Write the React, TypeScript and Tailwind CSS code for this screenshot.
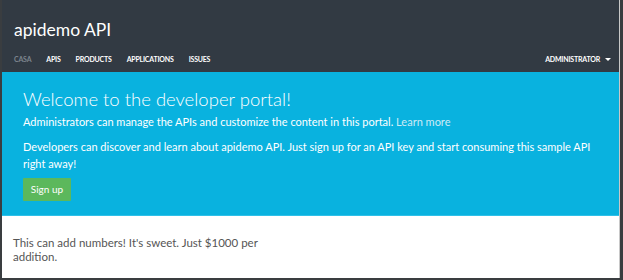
export default function App() {
  const nav = ["APIS", "PRODUCTS", "APPLICATIONS", "ISSUES"];
  return (
    <div
      className="h-[280px] w-[623px] overflow-hidden bg-[#3a3d40] pb-[2px] pl-[2px] pr-[3px]"
      style={{ fontFamily: "Lato, 'Open Sans', sans-serif" }}
    >
      <div className="flex h-full flex-col border-r border-[#c8c8c8] bg-white">
        <header className="h-[72px] bg-[#323a43] pl-3 pr-[6px]">
          <h1 className="pt-[18px] text-[17.5px] leading-[24px] text-white">apidemo API</h1>
          <nav className="mt-[12px] flex h-[10px] items-center text-[7px] font-bold leading-[10px] tracking-[-0.2px] text-white">
            <span className="text-[#7d858e]">CASA</span>
            <div className="ml-[15px] flex gap-[15px]">
              {nav.map((n) => (
                <span key={n}>{n}</span>
              ))}
            </div>
            <span className="ml-auto mr-[2px] flex items-center gap-[5px]">
              ADMINISTRATOR
              <span className="h-0 w-0 border-x-[3px] border-t-[3px] border-x-transparent border-t-white" />
            </span>
          </nav>
        </header>
        <section className="h-[144px] border-b border-[#2fc0e8] bg-[#09b2df] px-[21px] text-white">
          <h2 className="pt-[15px] text-[18.5px] font-light leading-[24px]">Welcome to the developer portal!</h2>
          <p className="mt-[2px] text-[11px] leading-[17px]">
            Administrators can manage the APIs and customize the content in this portal.{" "}
            <span className="text-[#cdeaf6]">Learn more</span>
          </p>
          <p className="mt-[8px] w-[575px] text-[11px] leading-[17px]">
            Developers can discover and learn about apidemo API. Just sign up for an API key and start consuming this sample API right away!
          </p>
          <button className="mt-[6px] h-[23px] w-[48px] rounded-[1px] bg-[#5cb85c] text-[10px] text-white">
            Sign up
          </button>
        </section>
        <div className="px-[11px] pt-[20px]">
          <p className="w-[255px] text-[11.5px] leading-[14px] text-[#555]">
            This can add numbers! It&apos;s sweet. Just $1000 per addition.
          </p>
        </div>
      </div>
    </div>
  );
}
